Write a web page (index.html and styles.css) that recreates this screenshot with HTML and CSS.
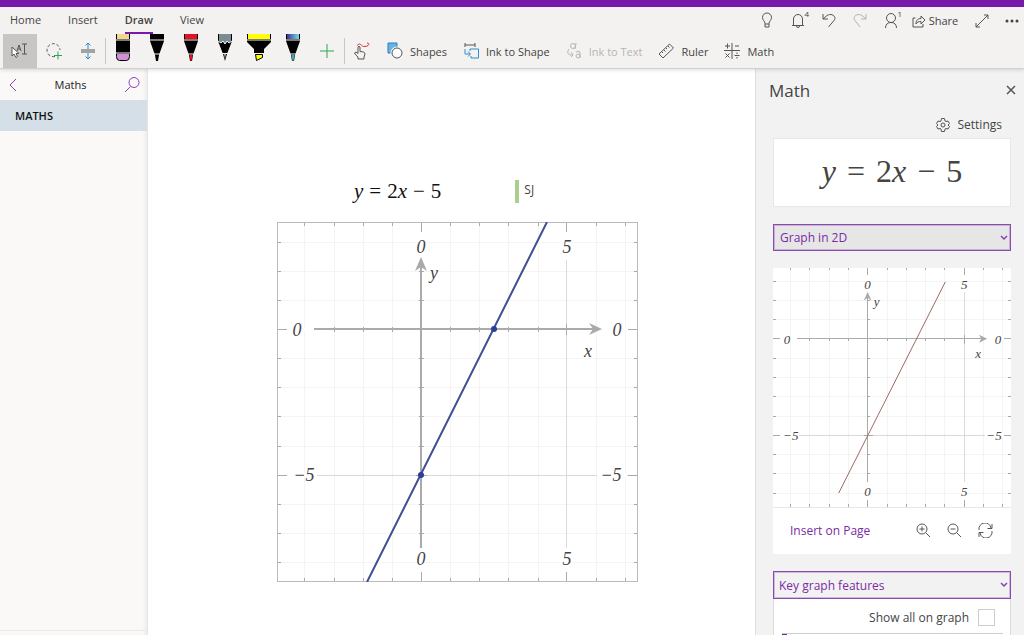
FILE: index.html
```
<!DOCTYPE html>
<html lang="en">
<head>
<meta charset="utf-8">
<title>Maths</title>
<link rel="stylesheet" href="styles.css">
</head>
<body>
<div class="app">
  <header class="header">
    <div class="top-row">
      <nav class="tabs">
        <button class="tab">Home</button>
        <button class="tab">Insert</button>
        <button class="tab tab-active">Draw</button>
        <button class="tab">View</button>
      </nav>
      <div class="actions">
        <button class="action" aria-label="Tell me"><svg width="16" height="18" viewBox="0 0 16 18"><path d="M6 11.500C6 9 3.500 8.500 3.500 5.500a4.500 4.500 0 0 1 9 0C12.500 8.500 10 9 10 11.500V15H6ZM6 12h4"/></svg></button>
        <button class="action" aria-label="Notifications"><svg width="16" height="18" viewBox="0 0 16 18"><path d="M2 13.500h12M3.500 13.500V7a4.500 4.500 0 0 1 9 0v6.500M6.500 14a1.500 1.500 0 0 0 3 0"/></svg><span class="count">4</span></button>
        <button class="action" aria-label="Undo"><svg width="16" height="18" viewBox="0 0 16 18"><path d="M2 2v5h5M2 7l4-3.500c5-3 10 1.500 7 5L7.500 15"/></svg></button>
        <button class="action faded" aria-label="Redo"><svg width="16" height="18" viewBox="0 0 16 18"><path d="M14 2v5H9M14 7l-4-3.500c-5-3-10 1.500-7 5L8 15"/></svg></button>
        <button class="action" aria-label="Account"><svg width="16" height="18" viewBox="0 0 16 18"><circle cx="8" cy="6" r="4.500"/><path d="M2.500 16c0-3.500 2-5.500 5.500-5.500s5.500 2 5.500 5.500"/></svg><span class="count">1</span></button>
        <button class="action share"><svg width="14" height="16" viewBox="0 0 14 16"><path d="M3.500 5H1v9h10v-3M4 11c0-4 2-5.500 5-5.500V3l4 4-4 4V8.500C6.500 8.500 5 9 4 11Z"/></svg>Share</button>
        <button class="action expand" aria-label="Full screen"><svg width="16" height="18" viewBox="0 0 16 18"><path d="M2 15 14 3M10 3h4v4M2 11v4h4"/></svg></button>
        <button class="action more" aria-label="More"><svg width="14" height="4" viewBox="0 0 14 4"><g class="dots"><circle cx="2" cy="2" r="1.500"/><circle cx="7" cy="2" r="1.500"/><circle cx="12" cy="2" r="1.500"/></g></svg></button>
      </div>
    </div>
    <div class="tools">
      <button class="tool selected" aria-label="Select or type"><svg width="20" height="18" viewBox="0 0 20 18"><path d="M2 5v9l2-2 2 3.500 1.500-1L6 11.500h3Z" fill="#fff"/><path d="M7 9 9 3l2 6M8 7h2"/><path d="M12 2h5M14.500 2v10M12 12h5"/></svg></button>
      <button class="tool" aria-label="Lasso select"><svg width="18" height="18" viewBox="0 0 18 18"><path d="M10 14.500a6.500 6.500 0 1 1 5-6.500" stroke-dasharray="3 2"/><path class="green" d="M13 9.500v8M9 13.500h8"/></svg></button>
      <button class="tool" aria-label="Insert space"><svg width="18" height="18" viewBox="0 0 18 18"><path d="M2 8h14M2 10h14"/><path class="blue" d="M9 7V1M6.500 3.500 9 1l2.500 2.500M9 11v6M6.500 14.500 9 17l2.500-2.500"/></svg></button>
      <span class="divider"></span>
      <button class="tool pen" aria-label="Eraser"><svg width="24" height="28" viewBox="0 0 24 28"><path d="M5 0h14v20H5Z" fill="#000"/><path d="M6 0h12v5H6Z" fill="#f4d58c"/><path d="M5.500 19.500h13v3q0 4-3 4h-7q-3 0-3-4Z" fill="#d18fd6" stroke="#000"/><path d="M5 6h14M5 19h14" stroke="#f5f4f2"/></svg></button>
      <button class="tool pen" aria-label="Black pen"><svg width="24" height="28" viewBox="0 0 24 28"><path d="M5 0h14v7l-5 14-1 6h-2l-1-6L5 7Z" fill="#000"/><path d="M5 6h14M9 20h6" stroke="#f5f4f2"/></svg></button>
      <button class="tool pen" aria-label="Red pen"><svg width="24" height="28" viewBox="0 0 24 28"><path d="M5 0h14v7l-5 14-1 6h-2l-1-6L5 7Z" fill="#000"/><path d="M6 0h12v5H6ZM10.500 21h3l-1 6h-1Z" fill="#e81123"/><path d="M5 6h14M9 20h6" stroke="#f5f4f2"/></svg></button>
      <button class="tool pen" aria-label="Pencil"><svg width="24" height="28" viewBox="0 0 24 28"><path d="M5 0h14v7l-5 13-2 7-2-7L5 7Z" fill="#000"/><path d="M6 0h12v7l-2 2-2-2-2 3-2-3-2 2-2-2Z" fill="#7d8b92"/><path d="m5 7 3 2 2-2 2 3 2-3 2 2 3-2M9 19.500h6" stroke="#f5f4f2"/><path d="M11 20h2l-1 5Z" fill="#aaa"/></svg></button>
      <button class="tool pen" aria-label="Highlighter"><svg width="24" height="28" viewBox="0 0 24 28"><path d="M0 0h24v8l-7 7v5H7v-5L0 8Z" fill="#000"/><path d="M1 0h22v5H1Z" fill="#ff0"/><path d="M8.500 20.500h7v3l-6 3Z" fill="#ff0" stroke="#000"/><path d="M0 6h24M7 19.500h10" stroke="#f5f4f2"/></svg></button>
      <button class="tool pen" aria-label="Galaxy pen"><svg width="24" height="28" viewBox="0 0 24 28"><defs><linearGradient id="galaxy"><stop offset="0" stop-color="#4b2c91"/><stop offset=".5" stop-color="#4c8fc4"/><stop offset="1" stop-color="#8fd0d8"/></linearGradient></defs><path d="M5 0h14v7l-5 14-1 6h-2l-1-6L5 7Z" fill="#000"/><path d="M6 0h12v5H6Z" fill="url(#galaxy)"/><path d="M10.500 21h3l-1 6h-1Z" fill="#3cb0b8"/><path d="M5 6h14M9 20h6" stroke="#f5f4f2"/></svg></button>
      <button class="tool" aria-label="Add pen"><svg width="16" height="16" viewBox="0 0 16 16"><path class="green" d="M8 1v14M1 8h14"/></svg></button>
      <span class="divider"></span>
      <button class="tool" aria-label="Draw with touch"><svg width="18" height="18" viewBox="0 0 18 18"><path d="M5 17v-2C3.500 14 2.500 12.500 1.500 11L3 10l2 1.500V5q1-1.500 2 0v4.500l3.500.5q1.500.5 1.500 2l-1 3v2Z"/><path class="red" d="M4 3.500C8-.5 7.500 5 12 4.500S17 1 14 1"/></svg></button>
      <button class="labeled"><svg width="16" height="18" viewBox="0 0 16 18"><path d="M1 1h9v10H1Z" fill="#6bb3e3" stroke="#2481c3"/><circle cx="10" cy="11" r="6.500" fill="#f5f4f2" stroke="none"/><circle cx="10" cy="11" r="5" fill="#fff"/></svg>Shapes</button>
      <button class="labeled"><svg width="16" height="18" viewBox="0 0 16 18"><path d="M2 3h10M2 1v4M12 1v4"/><path class="blue" d="M7 9V7h8.500v9H8v-2M2 7v5h5M5 9.500 7.500 12 5 14.500"/></svg>Ink to Shape</button>
      <button class="labeled" disabled><svg width="16" height="18" viewBox="0 0 16 18"><circle cx="7" cy="4" r="2.500"/><path d="M10 1 9 7M3 7q-3 4 1 6h3M5 10l2 3-2 2M10 10q4-2 4 1v5"/><circle cx="12" cy="14" r="2"/></svg>Ink to Text</button>
      <button class="labeled"><svg width="16" height="18" viewBox="0 0 16 18"><path d="M11.500 2 15.500 6 5 16 1 12ZM10 4l1.500 1.500M8 6l1 1M6 8l1.500 1.500M4 10l1 1"/></svg>Ruler</button>
      <button class="labeled"><svg width="16" height="18" viewBox="0 0 16 18"><path d="M8 1v16M0 8.500h16M1 4h5M3.500 1.500v5M11 4h4M1.500 11.500l4 4M5.500 11.500l-4 4M10.500 13.500h5M13 10.500v1.500M13 15v1.500"/></svg>Math</button>
    </div>
  </header>

  <div class="body">
    <aside class="sidebar">
      <div class="notebook">
        <button class="plain" aria-label="Back"><svg width="10" height="16" viewBox="0 0 10 16"><path class="purple" d="M9 2 3 8l6 6"/></svg></button>
        <h2 class="notebook-name">Maths</h2>
        <button class="plain" aria-label="Search"><svg width="16" height="18" viewBox="0 0 16 18"><g class="purple"><circle cx="10" cy="6.500" r="5"/><path d="M6.500 10.500 1 16"/></g></svg></button>
      </div>
      <button class="section">MATHS</button>
      <div class="sidebar-foot"></div>
    </aside>

    <main class="page">
      <div class="note">
        <p class="equation"><i>y</i><span>=</span><span>2<i>x</i></span><span>−</span><span>5</span></p>
        <p class="author">SJ</p>
      </div>
      <svg class="graph" width="361" height="360" viewBox="0 0 361 360" role="img" aria-label="Graph of y = 2x − 5">
        <path class="grid" d="M27 0V360M57 0V360M86 0V360M115 0V360M173 0V360M202 0V360M231 0V360M261 0V360M319 0V360M348 0V360M0 20H361M0 49H361M0 78H361M0 136H361M0 165H361M0 194H361M0 224H361M0 282H361M0 311H361M0 340H361"/>
        <path class="grid-major" d="M289 0V360M0 253H361"/>
        <path class="knock" d="M144 10V38M289 10V38M144 326V350M289 326V350M10 107H37M10 253H40M325 107H350M320 253H350"/>
        <path class="tick" d="M27 0v4M57 0v4M86 0v4M115 0v4M173 0v4M202 0v4M231 0v4M261 0v4M319 0v4M348 0v4M27 360v-4M57 360v-4M86 360v-4M115 360v-4M173 360v-4M202 360v-4M231 360v-4M261 360v-4M319 360v-4M348 360v-4M0 20h4M0 49h4M0 78h4M0 136h4M0 165h4M0 194h4M0 224h4M0 282h4M0 311h4M0 340h4M361 20h-4M361 49h-4M361 78h-4M361 136h-4M361 165h-4M361 194h-4M361 224h-4M361 282h-4M361 311h-4M361 340h-4M144 0v10M289 0v10M144 360v-10M289 360v-10M0 107h10M0 253h10M361 107h-10M361 253h-10"/>
        <path class="tick" d="M57 105v5M86 105v5M115 105v5M173 105v5M202 105v5M231 105v5M261 105v5M289 102v11M142 49h5M142 78h5M142 136h5M142 165h5M142 194h5M142 224h5M139 253h11M142 282h5M142 311h5"/>
        <path class="axis" d="M37 107H318M144 326V42"/>
        <path class="arrow" d="M144 35l6 14-6-4-6 4ZM325 107l-13-6 4 6-4 6Z"/>
        <rect class="frame" x="0" y="0" width="360" height="359"/>
        <path class="curve" d="M270 0 90 360"/>
        <circle class="point" cx="217" cy="107" r="3"/><circle class="point" cx="144" cy="253" r="3"/>
        <g class="label"><text x="144" y="31">0</text><text x="290" y="31">5</text><text x="144" y="343">0</text><text x="290" y="343">5</text><text x="20" y="114">0</text><text x="340" y="114">0</text><text x="27" y="259">−5</text><text x="334" y="259">−5</text><text x="157" y="57">y</text><text x="311" y="135">x</text></g>
      </svg>
    </main>

    <aside class="pane">
      <div class="pane-head">
        <h1 class="pane-title">Math</h1>
        <button class="plain" aria-label="Close"><svg width="10" height="10" viewBox="0 0 10 10"><path class="strong" d="m1 1 8 8M9 1 1 9"/></svg></button>
      </div>
      <button class="settings"><svg width="14" height="14" viewBox="0 0 14 14"><path d="M5.500.5h3l.5 2.500 1 .5 2-.5 1.500 2.500L12 7l1.500 1.500L12 11l-2-.5-1 .5-.5 2.500h-3L5 11l-1-.5-2 .5L.5 8.500 2 7 .5 5.500 2 3l2 .5 1-.5Z"/><circle cx="7" cy="7" r="2"/></svg>Settings</button>
      <div class="equation equation-large"><i>y</i><span>=</span><span>2<i>x</i></span><span>−</span><span>5</span></div>
      <div class="picker">
        <select class="select filled" aria-label="Action"><option>Graph in 2D</option></select>
        <svg class="chevron" width="8" height="6" viewBox="0 0 8 6"><path class="purple strong" d="m1 1 3 3 3-3"/></svg>
      </div>
      <section class="card">
        <svg class="graph small" viewBox="0 0 239 240" role="img" aria-label="Preview graph of y = 2x − 5">
          <path class="grid" d="M18 0V240M37 0V240M57 0V240M76 0V240M115 0V240M134 0V240M153 0V240M172 0V240M211 0V240M230 0V240M0 14H239M0 33H239M0 52H239M0 91H239M0 110H239M0 129H239M0 149H239M0 187H239M0 206H239M0 226H239"/>
          <path class="grid-major" d="M192 0V240M0 168H239"/>
          <path class="knock" d="M95 7V24M192 7V24M95 215V233M192 215V233M7 71H24M7 168H26M218 71H232M213 168H232"/>
          <path class="tick" d="M18 0v2M37 0v2M57 0v2M76 0v2M115 0v2M134 0v2M153 0v2M172 0v2M211 0v2M230 0v2M18 240v-3M37 240v-3M57 240v-3M76 240v-3M115 240v-3M134 240v-3M153 240v-3M172 240v-3M211 240v-3M230 240v-3M0 14h3M0 33h3M0 52h3M0 91h3M0 110h3M0 129h3M0 149h3M0 187h3M0 206h3M0 226h3M239 14h-3M239 33h-3M239 52h-3M239 91h-3M239 110h-3M239 129h-3M239 149h-3M239 187h-3M239 206h-3M239 226h-3M95 0v7M192 0v7M95 240v-7M192 240v-7M0 71h7M0 168h7M239 71h-7M239 168h-7"/>
          <path class="tick" d="M37 70v3M57 70v3M76 70v3M115 70v3M134 70v3M153 70v3M172 70v3M192 67v9M94 33h3M94 52h3M94 91h3M94 110h3M94 129h3M94 149h3M91 168h9M94 187h3M94 206h3"/>
          <path class="axis-thin" d="M24 71H210M95 215V28"/>
          <path class="arrow" d="M95 24l4 9-4-3-4 3ZM215 71l-8-4 2 4-2 4Z"/>
          <path class="curve-red" d="M173 14 66 226"/>
          <g class="label"><text x="95" y="21">0</text><text x="192" y="21">5</text><text x="95" y="229">0</text><text x="192" y="229">5</text><text x="14" y="76">0</text><text x="226" y="76">0</text><text x="18" y="173">−5</text><text x="222" y="173">−5</text><text x="104" y="38">y</text><text x="206" y="90">x</text></g>
        </svg>
        <div class="card-foot">
          <button class="insert">Insert on Page</button>
          <button class="plain" aria-label="Zoom in"><svg width="15" height="15" viewBox="0 0 15 15"><circle cx="6" cy="6" r="5"/><path d="m10 10 4 4M3.500 6h5M6 3.500v5"/></svg></button>
          <button class="plain" aria-label="Zoom out"><svg width="15" height="15" viewBox="0 0 15 15"><circle cx="6" cy="6" r="5"/><path d="m10 10 4 4M3.500 6h5"/></svg></button>
          <button class="plain" aria-label="Reset view"><svg width="15" height="15" viewBox="0 0 15 15"><path d="M1 7a6 6 0 0 1 12-2M14 1v4.500H9.500M14 8a6 6 0 0 1-12 2M1 14V9.500h4.500"/></svg></button>
        </div>
      </section>
      <div class="picker">
        <select class="select select-lower" aria-label="Section"><option>Key graph features</option></select>
        <svg class="chevron" width="8" height="6" viewBox="0 0 8 6"><path class="purple strong" d="m1 1 3 3 3-3"/></svg>
      </div>
      <div class="features">
        <label class="show-all">Show all on graph <input class="check" type="checkbox"></label>
        <div class="feature-row"><span class="marker"></span></div>
      </div>
    </aside>
  </div>
</div>
</body>
</html>
```
FILE: styles.css
```
* { box-sizing: border-box; }
body { margin: 0; font-family: "Open Sans", "Noto Sans", sans-serif; font-size: 11px; color: #444; }
button { font: inherit; color: inherit; background: none; border: 0; padding: 0; }
svg { display: block; flex: none; fill: none; stroke: #555; }
h1, h2, p { margin: 0; font-weight: 400; }
.green { stroke: #2aa84f; }
.blue { stroke: #2f8fcd; }
.red { stroke: #e03030; }
.purple { stroke: #8a3fb5; }
.strong { stroke-width: 1.5; }

.app { display: flex; flex-direction: column; height: 100vh; overflow: hidden; }
.header { position: relative; z-index: 1; background: #f3f2f1; border-top: 7px solid #7719aa; border-bottom: 1px solid #d0d0d0; box-shadow: 0 1px 4px #0002; }
.top-row { display: flex; justify-content: space-between; height: 27px; }
.tabs { display: flex; gap: 27px; padding-left: 10px; }
.tab { height: 27px; border-bottom: 2px solid transparent; }
.tab-active { font-weight: 600; border-color: #7719aa; }
.actions { display: flex; }
.action { position: relative; width: 31px; display: flex; align-items: center; justify-content: center; }
.faded { opacity: .4; }
.count { position: absolute; top: 1px; right: 4px; font-size: 8px; line-height: 12px; }
.share { width: 58px; gap: 3px; }
.expand { width: 36px; }
.more { width: 24px; }
.dots { fill: #444; stroke: none; }

.tools { display: flex; align-items: center; height: 34px; padding-left: 3px; }
.tool { width: 34px; height: 34px; display: flex; align-items: center; justify-content: center; }
.selected { background: #c8c6c4; }
.pen { align-items: flex-start; }
.pen svg { stroke: none; }
.divider { width: 1px; height: 26px; background: #c8c6c4; }
.labeled { display: flex; align-items: center; gap: 7px; padding: 0 8px; height: 34px; white-space: nowrap; }
.labeled:disabled { color: #b5b5b5; }
.labeled:disabled svg { stroke: #b5b5b5; }

.body { flex: 1; display: flex; min-height: 0; }
.sidebar { width: 148px; display: flex; flex-direction: column; background: #faf9f8; border-right: 1px solid #e4e4e4; box-shadow: inset -3px 0 3px #0000000a; }
.notebook { display: flex; align-items: center; justify-content: space-between; height: 31px; padding: 0 7px; }
.notebook-name { font-size: 11px; color: #222; }
.section { height: 31px; padding-left: 15px; text-align: left; font-weight: 600; color: #111; background: #d5dfe7; }
.sidebar-foot { height: 5px; margin-top: auto; border-top: 1px solid #e8e8e8; }

.page { flex: 1; min-width: 0; background: #fff; padding: 109px 0 0 129px; }
.note { display: flex; gap: 74px; padding-left: 77px; height: 44px; }
.equation { display: flex; gap: 6px; font: 21px/26px "Liberation Serif", serif; color: #111; white-space: nowrap; }
.author { height: 23px; margin-top: 2px; padding-left: 5px; border-left: 4px solid #a9d18e; font-size: 12px; line-height: 20px; }

.grid { stroke: #f4f4f4; shape-rendering: crispEdges; }
.grid-major { stroke: #dadada; shape-rendering: crispEdges; }
.knock { stroke: #fff; stroke-width: 4px; }
.tick { stroke: #aaa; shape-rendering: crispEdges; }
.axis { stroke: #aaa; stroke-width: 2px; shape-rendering: crispEdges; }
.axis-thin { stroke: #aaa; shape-rendering: crispEdges; }
.arrow { fill: #aaa; stroke: none; }
.frame { stroke: #bbb; shape-rendering: crispEdges; }
.curve { stroke: #3e4f94; stroke-width: 2px; }
.curve-red { stroke: #9b6a5d; }
.point { fill: #2b3f94; stroke: none; }
.label { font: italic 18px "Liberation Serif", serif; fill: #444; stroke: none; text-anchor: middle; }
.small .label { font-size: 13px; }

.pane { width: 269px; background: #f2f2f2; border-left: 1px solid #ddd; padding: 0 13px 0 17px; display: flex; flex-direction: column; }
.pane-head { display: flex; justify-content: space-between; align-items: center; height: 42px; margin: 0 -5px 0 -4px; flex: none; }
.pane-title { font-size: 17px; }
.settings { display: flex; align-items: center; align-self: flex-end; gap: 8px; height: 27px; margin-right: 9px; font-size: 12px; flex: none; }
.equation-large { justify-content: center; gap: 11px; height: 69px; flex: none; margin-bottom: 17px; background: #fff; border: 1px solid #e8e8e8; font-size: 32px; line-height: 64px; color: #444; }
.picker { position: relative; flex: none; }
.select { display: block; width: 100%; height: 27px; padding: 0 6px; appearance: none; background: #f2f2f2; border: 1px solid #8a4bb0; border-radius: 0; outline: 1px solid #8a4bb055; outline-offset: -2px; font: 12px "Open Sans", sans-serif; color: #7a2ba5; }
.filled { background: #e6e6e6; }
.select-lower { height: 28px; padding: 2px 5px 0; }
.chevron { position: absolute; right: 3px; top: 11px; }
.card { flex: none; margin: 17px 0; background: #fff; }
.small { width: 100%; border-bottom: 1px solid #e6e6e6; }
.card-foot { display: flex; align-items: center; gap: 16px; height: 46px; padding: 0 18px 0 17px; }
.insert { margin-right: auto; font-size: 12px; color: #7a2ba5; }
.features { background: #fff; border: 1px solid #ddd; border-top: 0; padding: 10px 7px 0 8px; }
.show-all { display: flex; justify-content: flex-end; align-items: center; gap: 9px; font-size: 12px; margin: 0 8px 7px 0; }
.check { appearance: none; width: 17px; height: 17px; margin: 0; background: #fff; border: 1px solid #ccc; }
.feature-row { height: 10px; border-top: 1px solid #ccc; }
.marker { display: block; width: 5px; height: 10px; background: #7719aa; }
```
